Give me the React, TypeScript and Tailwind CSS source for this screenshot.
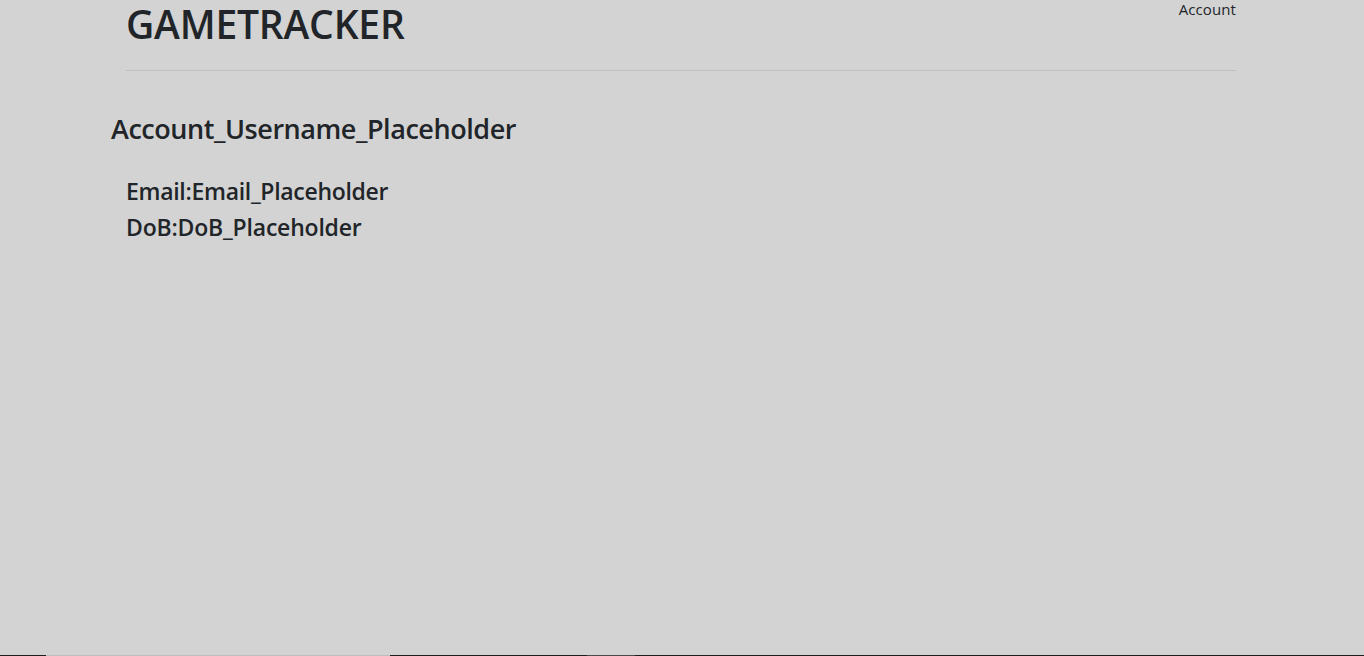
export default function App() {
  return (
    <div className="flex min-h-[656px] flex-col bg-[#d3d3d3] font-['Open_Sans',sans-serif] text-[#212529]">
      <header className="mx-auto w-[1112px] pr-[2px]">
        <div className="flex items-start justify-between">
          <h1 className="text-[39px] leading-[48px] font-semibold tracking-[-0.2px]">GAMETRACKER</h1>
          <a className="text-[15px] leading-[18px] tracking-[0.1px] text-[#212529]">Account</a>
        </div>
        <hr className="mt-[22px] border-t border-[#c0c0c0]" />
      </header>

      <main className="mx-auto w-[1142px] pt-[41px]">
        <h3 className="text-[27px] leading-[34px] font-semibold tracking-[-0.45px]">Account_Username_Placeholder</h3>
        <div className="mt-[27px] px-[15px]">
          <h4 className="text-[23px] leading-[36px] font-semibold tracking-[-0.3px]">Email:Email_Placeholder</h4>
          <h4 className="text-[23px] leading-[36px] font-semibold tracking-[-0.2px]">DoB:DoB_Placeholder</h4>
        </div>
      </main>

      <div className="mt-auto flex h-px">
        <div className="w-[46px] bg-[#1e1e1e]" />
        <div className="w-[344px] bg-[#bdbdbd]" />
        <div className="w-[197px] bg-[#1e1e1e]" />
        <div className="w-[48px] bg-[#4a4a4a]" />
        <div className="flex-1 bg-[#1e1e1e]" />
      </div>
    </div>
  );
}
